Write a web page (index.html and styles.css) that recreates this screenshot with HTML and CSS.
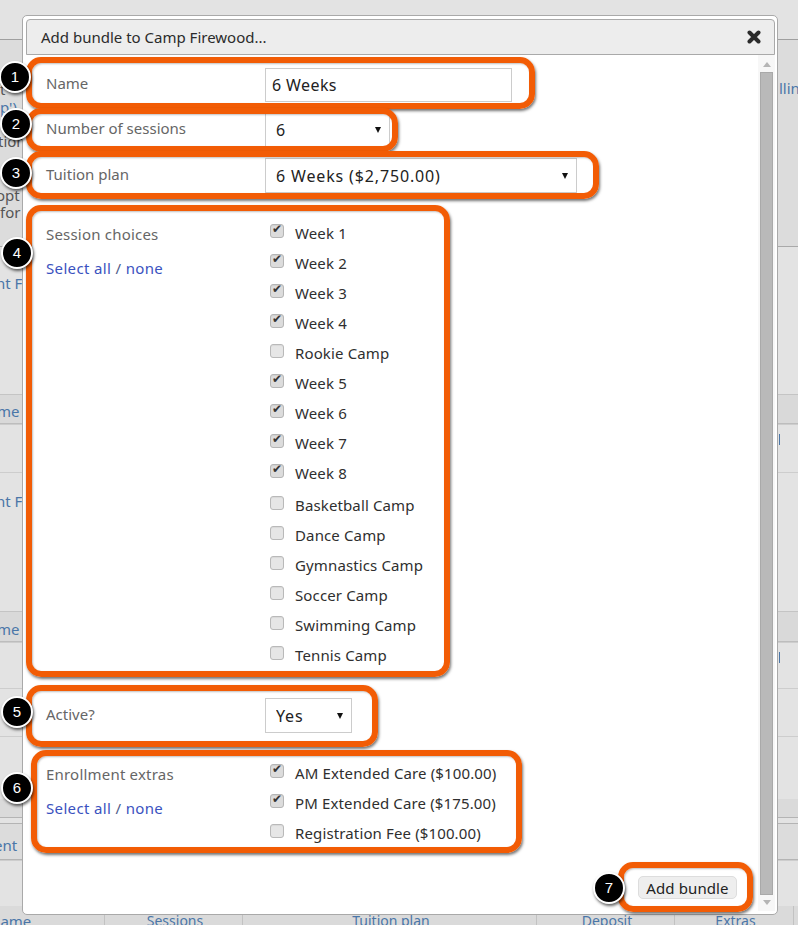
FILE: index.html
```html
<!DOCTYPE html>
<html lang="en">
<head>
<meta charset="utf-8">
<title>Add bundle to Camp Firewood...</title>
<link rel="stylesheet" href="styles.css">
</head>
<body>
<div class="backdrop">
  <div class="band band-top"></div>
  <div class="band band-panel">
    <p class="frag frag-l1">t</p>
    <p class="frag frag-l2 link">p')</p>
    <p class="frag frag-l3">tion</p>
    <p class="frag frag-l4">opt</p>
    <p class="frag frag-l5">for</p>
    <p class="frag frag-r1 link">lling</p>
  </div>
  <div class="band band-a"><p class="frag frag-nt link">nt Fo</p></div>
  <div class="band band-head line"><p class="frag frag-me link">me</p></div>
  <div class="band band-row line"><p class="tick"></p></div>
  <div class="band band-big line"><p class="frag frag-nt2 link">nt Fo</p></div>
  <div class="band band-head2 line"><p class="frag frag-me2 link">me</p></div>
  <div class="band band-row-b line"><p class="tick"></p></div>
  <div class="band band-row line"></div>
  <div class="band band-tall line"><p class="frag frag-r2">a</p></div>
  <div class="band band-foot"></div>
  <div class="band band-gap"></div>
  <div class="band band-sum line"><p class="frag frag-ent link">ent</p></div>
  <div class="band band-row2 line"></div>
  <div class="cols">
    <span class="col col-name link">Name</span>
    <span class="col col-ses link">Sessions</span>
    <span class="col col-tui link">Tuition plan</span>
    <span class="col col-dep link">Deposit</span>
    <span class="col col-ext link">Extras</span>
    <span class="col col-end"></span>
  </div>
</div>

<section class="modal">
  <header class="titlebar">
    <h1 class="title">Add bundle to Camp Firewood...</h1>
    <svg class="close" width="14" height="14" viewBox="0 0 14 14" aria-label="Close"><path d="M2.5 2.5 11.5 11.5M11.5 2.5 2.5 11.5" stroke="#2b2b2b" stroke-width="4" stroke-linecap="round"/></svg>
  </header>
  <div class="body">
    <form class="form">
      <div class="row row-name">
        <label class="label">Name</label>
        <input class="field field-name" type="text" value="6 Weeks">
      </div>
      <div class="row row-sessions">
        <label class="label">Number of sessions</label>
        <span class="select select-sessions"><select><option>6</option></select></span>
      </div>
      <div class="row row-plan">
        <label class="label">Tuition plan</label>
        <span class="select select-plan"><select><option>6 Weeks ($2,750.00)</option></select></span>
      </div>
      <div class="row row-list row-choices">
        <div class="side">
          <div class="side-label">Session choices</div>
          <div class="side-links"><a href="#">Select all</a> / <a href="#">none</a></div>
        </div>
        <div class="checks">
          <label class="check"><input type="checkbox" checked>Week 1</label>
          <label class="check"><input type="checkbox" checked>Week 2</label>
          <label class="check"><input type="checkbox" checked>Week 3</label>
          <label class="check"><input type="checkbox" checked>Week 4</label>
          <label class="check"><input type="checkbox">Rookie Camp</label>
          <label class="check"><input type="checkbox" checked>Week 5</label>
          <label class="check"><input type="checkbox" checked>Week 6</label>
          <label class="check"><input type="checkbox" checked>Week 7</label>
          <label class="check"><input type="checkbox" checked>Week 8</label>
          <label class="check check-first"><input type="checkbox">Basketball Camp</label>
          <label class="check"><input type="checkbox">Dance Camp</label>
          <label class="check"><input type="checkbox">Gymnastics Camp</label>
          <label class="check"><input type="checkbox">Soccer Camp</label>
          <label class="check"><input type="checkbox">Swimming Camp</label>
          <label class="check"><input type="checkbox">Tennis Camp</label>
        </div>
      </div>
      <div class="row row-active">
        <label class="label">Active?</label>
        <span class="select select-active"><select><option>Yes</option></select></span>
      </div>
      <div class="row row-list row-extras">
        <div class="side">
          <div class="side-label">Enrollment extras</div>
          <div class="side-links"><a href="#">Select all</a> / <a href="#">none</a></div>
        </div>
        <div class="checks">
          <label class="check"><input type="checkbox" checked>AM Extended Care ($100.00)</label>
          <label class="check"><input type="checkbox" checked>PM Extended Care ($175.00)</label>
          <label class="check"><input type="checkbox">Registration Fee ($100.00)</label>
        </div>
      </div>
      <div class="actions"><button class="btn" type="button">Add bundle</button></div>
    </form>
    <div class="scrollbar">
      <span class="arrow arrow-up"></span>
      <span class="thumb"></span>
      <span class="arrow arrow-down"></span>
    </div>
  </div>
</section>

<div class="mark mark-1"></div>
<div class="mark mark-2"></div>
<div class="mark mark-3"></div>
<div class="mark mark-4"></div>
<div class="mark mark-5"></div>
<div class="mark mark-6"></div>
<div class="mark mark-7"></div>
<div class="badge badge-1">1</div>
<div class="badge badge-2">2</div>
<div class="badge badge-3">3</div>
<div class="badge badge-4">4</div>
<div class="badge badge-5">5</div>
<div class="badge badge-6">6</div>
<div class="badge badge-7">7</div>
</body>
</html>
```
FILE: styles.css
```css
* { box-sizing: border-box; }
html, body { margin: 0; height: 925px; overflow: hidden; }
body { position: relative; font: 15px/30px "Noto Sans", sans-serif; color: #333; background: #e3e3e3; }

/* dimmed page behind the dialog */
.backdrop { height: 925px; overflow: hidden; display: flex; flex-direction: column; color: #555; }
.band { position: relative; flex: none; }
.line { border-top: 1px solid #cdcdcd; }
.band-top { height: 40px; background: #e3e3e3; border-bottom: 1px solid #9f9f9f; }
.band-panel { height: 207px; background: #dcdcdc; border-bottom: 1px solid #a9a9a9; }
.band-a { height: 147px; background: #e3e3e3; }
.band-head { height: 30px; background: #d9d9d9; border-top-color: #c4c4c4; border-bottom: 1px solid #bdbdbd; }
.band-head2 { height: 31px; background: #d9d9d9; border-top-color: #c4c4c4; border-bottom: 1px solid #bdbdbd; }
.band-row { height: 48px; background: #e3e3e3; }
.band-row-b { height: 46px; background: #e3e3e3; }
.band-big { height: 139px; background: #e3e3e3; }
.band-tall { height: 63px; background: #e3e3e3; }
.band-foot { height: 19px; background: #dadada; border-bottom: 1px solid #b4b4b4; }
.band-gap { height: 5px; background: #e3e3e3; }
.band-sum { height: 37px; background: #dcdcdc; border-top-color: #b4b4b4; border-bottom: 1px solid #b4b4b4; }
.band-row2 { height: 46px; background: #e3e3e3; }
.frag { position: absolute; margin: 0; line-height: 16px; white-space: nowrap; }
.link { color: #4a76a8; }
.frag-l1 { left: 0; top: 41px; }
.frag-l2 { left: 0; top: 59px; }
.frag-l3 { left: -2px; top: 93px; color: #555; }
.frag-l4 { left: -4px; top: 147px; }
.frag-l5 { left: 0; top: 164px; }
.frag-r1 { left: 779px; top: 40px; }
.frag-nt { left: -4px; top: 28px; }
.frag-me { left: -3px; top: 8px; }
.frag-me2 { left: -3px; top: 9px; }
.frag-nt2 { left: -4px; top: 20px; }
.frag-r2 { left: 770px; top: 8px; }
.frag-ent { left: -6px; top: 13px; }
.tick { position: absolute; margin: 0; left: 779px; top: 9px; width: 1px; height: 11px; background: #4a76a8; }
.cols { flex: 1; display: grid; grid-template-columns: 105px 138px 294px 138px 119px 4px; background: #dadada; }
.col { border-right: 1px solid #c2c2c2; text-align: center; line-height: 20px; padding: 5px 0 0 3px; white-space: nowrap; overflow: hidden; font-size: 14px; }
.col-name { text-align: left; text-indent: -11px; padding-left: 0; font-size: 15px; }
.col-end { border-right: 0; padding: 0; }

/* dialog */
.modal { position: absolute; left: 22px; top: 15px; width: 756px; height: 900px; padding: 3px 2px 3px 3px; background: #fff; border: 1px solid #a9a9a9; border-radius: 5px; display: flex; flex-direction: column; }
.titlebar { flex: none; height: 36px; padding: 0 14px; display: flex; align-items: center; justify-content: space-between; background: #ededed; border: 1px solid #a9a9a9; border-radius: 4px 4px 0 0; }
.title { margin: 0; font-size: 15px; font-weight: 400; color: #2b2b2b; }
.close { margin-right: -1px; }
.body { flex: 1; min-height: 0; display: flex; }
.form { flex: 1; padding: 13px 19px 0 20px; min-width: 0; }
.row { display: grid; grid-template-columns: 219px 1fr; align-items: center; }
.label { color: #666; padding-bottom: 4px; }
.row-name { height: 33px; }
.row-sessions { height: 35px; margin-top: 11px; }
.row-plan { height: 35px; margin-top: 11px; }
.row-choices { margin-top: 25px; align-items: start; }
.row-active { height: 35px; margin-top: 28px; }
.row-extras { margin-top: 25px; align-items: start; }
.field, select { font: 16px "Noto Sans", sans-serif; color: #222; background: #fff; border: 1px solid #ccc; border-radius: 0; height: 100%; }
.field { padding: 0 6px; width: 247px; outline: 0; letter-spacing: .4px; }
.select { position: relative; display: block; height: 35px; }
.select select { appearance: none; width: 100%; padding: 0 0 0 10px; outline: 0; letter-spacing: .85px; }
.select::after { content: ""; position: absolute; top: 15px; right: 9px; border-left: 3px solid transparent; border-right: 3px solid transparent; border-top: 6px solid #111; pointer-events: none; }
.select-sessions { width: 125px; }
.select-plan { width: 312px; }
.select-active { width: 87px; }
.side { padding-top: 1px; }
.side-label { color: #666; letter-spacing: .2px; }
.side-links { margin-top: 4px; color: #4d5a8a; letter-spacing: .35px; }
.side-links a { color: #3a52c0; text-decoration: none; }
.checks { display: flex; flex-direction: column; }
.check { display: flex; align-items: center; height: 30px; color: #2f2f2f; letter-spacing: .13px; }
.check-first { margin-top: 2px; }
.check input { appearance: none; position: relative; flex: none; margin: -4px 11px 0 5px; width: 14px; height: 14px; background: #e6e6e6; border: 1px solid #b9b9b9; border-radius: 3px; box-shadow: inset 0 1px 1px rgba(0,0,0,.06); }
.check input:checked { background: #dcdcdc; border-color: #b5b5b5; }
.check input:checked::after { content: "\2714"; position: absolute; left: 1px; top: -2px; font: 12px/12px "DejaVu Sans", sans-serif; color: #333; }
.actions { display: flex; justify-content: flex-end; margin-top: 28px; padding-right: 2px; }
.btn { height: 23px; width: 99px; padding: 0; font: 15px "Noto Sans", sans-serif; letter-spacing: .1px; color: #222; background: #eee; border: 1px solid #ddd; border-radius: 5px; }

/* scrollbar */
.scrollbar { flex: none; width: 17px; background: #f7f7f7; display: flex; flex-direction: column; align-items: center; justify-content: space-between; padding: 7px 0 6px; }
.thumb { flex: 1; width: 13px; margin: 5px 0; background: #b9b9b9; border: 1px solid #a9a9a9; }
.arrow { border-left: 4px solid transparent; border-right: 4px solid transparent; }
.arrow-up { border-bottom: 5px solid #b5b5b5; }
.arrow-down { border-top: 5px solid #b5b5b5; }

/* orange call-outs */
.mark { position: absolute; border: 6px solid #f25c05; border-radius: 15px; box-shadow: 1px 2px 3px rgba(0,0,0,.55), inset 1px 1px 2px rgba(0,0,0,.25); }
.mark-1 { left: 26px; top: 57px; width: 509px; height: 52px; }
.mark-2 { left: 26px; top: 108px; width: 372px; height: 44px; }
.mark-3 { left: 26px; top: 151px; width: 573px; height: 48px; }
.mark-4 { left: 26px; top: 205px; width: 424px; height: 472px; }
.mark-5 { left: 26px; top: 685px; width: 352px; height: 62px; }
.mark-6 { left: 31px; top: 750px; width: 491px; height: 103px; }
.mark-7 { left: 618px; top: 862px; width: 135px; height: 50px; }

.badge { position: absolute; width: 32px; height: 32px; border-radius: 50%; background: #000; border: 2px solid #fff; box-shadow: 1px 2px 3px rgba(0,0,0,.6); color: #fff; font: 15px/28px "Liberation Sans", sans-serif; text-align: center; }
.badge-1 { left: -1px; top: 61px; }
.badge-2 { left: 0; top: 108px; }
.badge-3 { left: 0; top: 157px; }
.badge-4 { left: 1px; top: 237px; }
.badge-5 { left: 1px; top: 696px; }
.badge-6 { left: 1px; top: 772px; }
.badge-7 { left: 593px; top: 872px; }
```
